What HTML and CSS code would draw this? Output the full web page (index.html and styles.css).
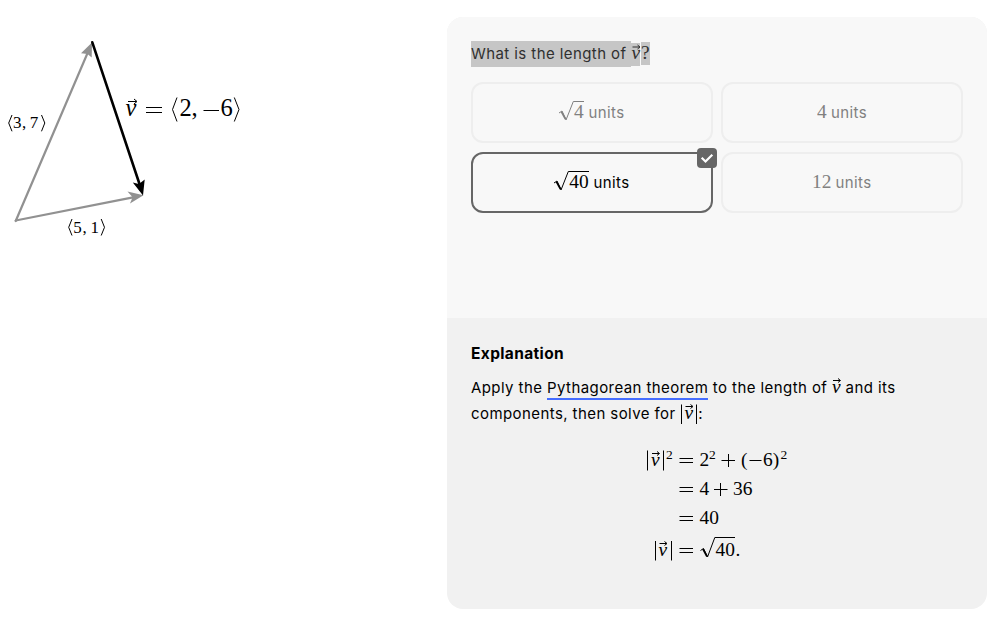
FILE: index.html
```html
<!DOCTYPE html>
<html lang="en">
<head>
<meta charset="utf-8">
<title>Vector length</title>
<link rel="stylesheet" href="styles.css">
</head>
<body>
<main class="page">
  <section class="figure">
    <svg class="diagram" width="260" height="250" viewBox="0 0 260 250">
      <g class="gray-arrow">
        <path class="shaft" d="M15.7 221 L88 52"/>
        <path class="head" d="M92 42.5 L91.7 57.5 L87.5 54 L81 53.2 Z"/>
        <path class="shaft" d="M15.7 220.5 L133 197.3"/>
        <path class="head" d="M143.5 195.2 L130 203.4 L132.6 197.3 L127.5 191.6 Z"/>
      </g>
      <g class="black-arrow">
        <path class="shaft" d="M92.3 42.3 L139.5 184"/>
        <path class="head" d="M143 195.5 L132.8 182.5 L139 184 L144.7 179.5 Z"/>
      </g>
      <g class="math label">
        <path class="line" d="M12 115 L8.7 123 L12 131.3 M41.5 115 L44.8 123 L41.5 131.3"/>
        <text x="12.9" y="128">3</text><text x="22" y="128">,</text><text x="29.8" y="128">7</text>
        <path class="line" d="M72 219 L68.7 227.3 L72 235.5 M101.2 219 L104.5 227.3 L101.2 235.5"/>
        <text x="73.3" y="232.5">5</text><text x="82.5" y="232.5">,</text><text x="90.5" y="232.5">1</text>
      </g>
      <g class="math result">
        <text class="vec" x="125.5" y="116">v</text>
        <path class="line" d="M128 101.5 H136.5 M134 99 L137 101.5 L134 104"/>
        <path class="line" d="M146 107.5 H162 M146 112.5 H162"/>
        <path class="line" d="M177 97.5 L172.5 109.5 L177 121.5 M234.3 97.5 L239 109.5 L234.3 121.5"/>
        <text x="179.5" y="116">2</text><text x="191.5" y="116">,</text>
        <path class="line" d="M203.5 110.5 H219"/>
        <text x="220.5" y="116">6</text>
      </g>
    </svg>
  </section>

  <article class="card">
    <section class="question">
      <p class="prompt"><span class="mark">What is the length of </span><svg class="math prompt-math" width="19" height="26" viewBox="0 0 19 26">
        <rect class="hl" x="0" y="2" width="9" height="23"/><rect class="hl" x="10" y="1" width="9" height="23"/>
        <text class="vec" x="0.5" y="18">v</text><path class="line" d="M1.5 6 H8.5 M6.5 4 L9 6 L6.5 8"/><text x="10" y="18">?</text>
      </svg></p>
      <div class="options">
        <button class="option"><svg class="math" width="25" height="26" viewBox="0 0 25 26"><path class="line" d="M0 13 L3 11 L7 20 L14.3 1.5 H25"/><path class="thick" d="M2.5 11.8 L6.5 19"/><text x="15" y="18">4</text></svg><span class="unit">units</span></button>
        <button class="option"><svg class="math" width="10" height="26" viewBox="0 0 10 26"><text x="0" y="18">4</text></svg><span class="unit">units</span></button>
        <button class="option selected"><svg class="math" width="35" height="26" viewBox="0 0 35 26"><path class="line" d="M0 13 L3 11 L7 20 L14.3 1.5 H35"/><path class="thick" d="M2.5 11.8 L6.5 19"/><text x="15.3" y="18">40</text></svg><span class="unit">units</span>
          <span class="badge"><svg width="20" height="20" viewBox="0 0 20 20"><path d="M4.7 9.8 L8.5 13.5 L15.3 6.7"/></svg></span></button>
        <button class="option"><svg class="math" width="19" height="26" viewBox="0 0 19 26"><text x="0" y="18">12</text></svg><span class="unit">units</span></button>
      </div>
    </section>

    <section class="explanation">
      <h2>Explanation</h2>
      <p class="line-one">Apply the <a class="term">Pythagorean theorem</a> to the length of <svg class="math inline" width="9" height="26" viewBox="0 0 9 26"><text class="vec" x="0" y="18">v</text><path class="line" d="M1 5.5 H8 M6 3.5 L8.5 5.5 L6 7.5"/></svg> and its</p>
      <p class="line-two">components, then solve for <svg class="math inline" width="18" height="26" viewBox="0 0 18 26"><path class="line" d="M1.5 3.5 V23 M16.5 3.5 V23"/><text class="vec" x="4.5" y="18">v</text><path class="line" d="M5.5 5.5 H12.5 M10.5 3.5 L13 5.5 L10.5 7.5"/></svg>:</p>
      <svg class="math equation" width="180" height="130" viewBox="630 440 180 130">
        <path class="line" d="M647.5 450.5 V470.5 M663.5 450.5 V470.5"/>
        <text class="vec" x="651" y="466">v</text><path class="line" d="M652 453.5 H659 M657 451.5 L659.5 453.5 L657 455.5"/>
        <text class="sup" x="666" y="458.5">2</text>
        <path class="line" d="M679.5 458.5 H693 M679.5 462.5 H693"/>
        <text x="699.5" y="466">2</text><text class="sup" x="709" y="458.5">2</text>
        <path class="line" d="M721.5 460.5 H735 M728.5 454 V467"/>
        <text x="741" y="466">(</text><path class="line" d="M749.5 460.5 H761.5"/><text x="763" y="466">6)</text><text class="sup" x="780.5" y="458.5">2</text>

        <path class="line" d="M679.5 487.5 H693 M679.5 491.5 H693"/>
        <text x="699.5" y="495">4</text><path class="line" d="M714 489.5 H727.5 M720.5 483 V496"/><text x="733" y="495">36</text>

        <path class="line" d="M679.5 516.5 H693 M679.5 520.5 H693"/>
        <text x="699.5" y="524">40</text>

        <path class="line" d="M655.5 541 V560.5 M671.5 541 V560.5"/>
        <text class="vec" x="658.5" y="556">v</text><path class="line" d="M659.5 543.5 H666.5 M664.5 541.5 L667 543.5 L664.5 545.5"/>
        <path class="line" d="M679.5 548.5 H693 M679.5 552.5 H693"/>
        <path class="line" d="M700.5 550.5 L703.5 548.5 L707.5 557 L714.8 537.5 H735"/><path class="thick" d="M703 549 L707 556.5"/>
        <text x="715.5" y="555.5">40</text><text x="735.5" y="555.5">.</text>
      </svg>
    </section>
  </article>
</main>
</body>
</html>
```
FILE: styles.css
```css
* { box-sizing: border-box; }
body {
  margin: 0;
  background: #fff;
  color: #000;
  font-family: Inter, "Liberation Sans", sans-serif;
  font-size: 15px;
  letter-spacing: 0.42px;
  line-height: 26px;
}
p, h2 { margin: 0; }
.page {
  display: grid;
  grid-template-columns: 447px 540px;
  height: 617px;
  overflow: hidden;
}
.diagram { display: block; }
.shaft { fill: none; stroke-width: 2.2; stroke-linecap: round; }
.gray-arrow .shaft { stroke: #919191; }
.gray-arrow .head { fill: #919191; }
.black-arrow .shaft { stroke: #000; stroke-width: 2.6; }
.black-arrow .head { fill: #000; }

.math {
  font-family: "Liberation Serif", serif;
  font-size: 19.4px;
  fill: currentColor;
  flex: none;
  letter-spacing: 0;
}
.math .vec { font-style: italic; }
.math .line { fill: none; stroke: currentColor; stroke-width: 1; }
.math .thick { fill: none; stroke: currentColor; stroke-width: 1.8; }
.math .sup { font-size: 13.5px; }
.label { font-size: 17px; }
.result { font-size: 24.5px; }
.hl { fill: #c6c6c6; }

.card {
  display: flex;
  flex-direction: column;
  height: 592px;
  margin-top: 17px;
  border-radius: 16px;
  overflow: hidden;
  background: #f1f1f1;
}
.question {
  height: 301px;
  padding: 24px 24px 0;
  background: #f8f8f8;
}
.prompt {
  display: flex;
  height: 26px;
  color: #303030;
}
.mark {
  width: 160px;
  background: #c6c6c6;
  white-space: pre;
}
.options {
  display: grid;
  grid-template-columns: 1fr 1fr;
  grid-auto-rows: 61px;
  gap: 9px 8px;
  margin-top: 15px;
}
.option {
  position: relative;
  display: flex;
  align-items: center;
  justify-content: center;
  gap: 4px;
  padding: 0;
  border: 2px solid #eee;
  border-radius: 12px;
  background: transparent;
  color: #808080;
  font: inherit;
  letter-spacing: inherit;
}
.option.selected { border-color: #666; color: #000; }
.badge {
  position: absolute;
  top: -6px;
  right: -6px;
  width: 20px;
  height: 20px;
  border-radius: 4px;
  background: #666;
}
.badge svg { display: block; }
.badge path { fill: none; stroke: #fff; stroke-width: 2.2; }

.explanation { padding: 23px 24px 0; white-space: nowrap; }
h2 { font-size: 15.5px; font-weight: 700; letter-spacing: 0.36px; line-height: 26px; }
.line-one { height: 26px; margin-top: 8px; }
.line-two { height: 26px; }
.term { border-bottom: 2px solid #456dff; padding-bottom: 1px; }
.inline { vertical-align: -8px; }
.equation { display: block; margin: 13px 0 0 159px; }
```
